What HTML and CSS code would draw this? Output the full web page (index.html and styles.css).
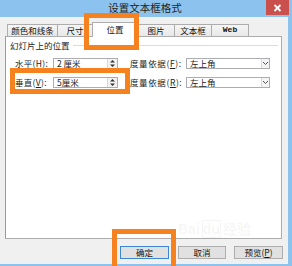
FILE: index.html
```html
<!DOCTYPE html>
<html lang="zh">
<head>
<meta charset="utf-8">
<title>设置文本框格式</title>
<link rel="stylesheet" href="styles.css">
</head>
<body>
<div class="window">
  <div class="titlebar">
    <div class="tb-side"></div>
    <div class="title">设置文本框格式</div>
    <div class="tb-side tb-right">
      <div class="close">
        <svg width="9" height="8" viewBox="0 0 9 8"><path d="M1.5 1 L7.5 7 M7.5 1 L1.5 7" stroke="#fff" stroke-width="1.8" fill="none"/></svg>
      </div>
    </div>
  </div>
  <div class="client">
    <div class="tabs">
      <div class="tab t1">颜色和线条</div>
      <div class="tab t2">尺寸</div>
      <div class="tab t3 active">位置</div>
      <div class="tab t4">图片</div>
      <div class="tab t5">文本框</div>
      <div class="tab t6 web">Web</div>
    </div>
    <div class="panel">
      <div class="group-head">
        <span class="group-label">幻灯片上的位置</span>
        <span class="group-line"></span>
      </div>
      <div class="row">
        <span class="lbl lbl1">水平(<u>H</u>):</span>
        <div class="spin">
          <span class="spin-val">2 厘米</span>
          <span class="spin-btn">
            <svg width="7" height="9" viewBox="0 0 7 9"><path d="M3.5 1 L6 3.5 H1 Z M1 5.5 H6 L3.5 8 Z" fill="#333"/></svg>
          </span>
        </div>
        <span class="lbl lbl2">度量依据(<u>F</u>):</span>
        <div class="combo">
          <span class="combo-val">左上角</span>
          <span class="combo-btn">
            <svg width="7" height="5" viewBox="0 0 7 5"><path d="M1 1 L3.5 3.5 L6 1" stroke="#555" stroke-width="1" fill="none"/></svg>
          </span>
        </div>
      </div>
      <div class="row">
        <span class="lbl lbl1">垂直(<u>V</u>):</span>
        <div class="spin">
          <span class="spin-val">5厘米</span>
          <span class="spin-btn">
            <svg width="7" height="9" viewBox="0 0 7 9"><path d="M3.5 1 L6 3.5 H1 Z M1 5.5 H6 L3.5 8 Z" fill="#333"/></svg>
          </span>
        </div>
        <span class="lbl lbl2">度量依据(<u>R</u>):</span>
        <div class="combo">
          <span class="combo-val">左上角</span>
          <span class="combo-btn">
            <svg width="7" height="5" viewBox="0 0 7 5"><path d="M1 1 L3.5 3.5 L6 1" stroke="#555" stroke-width="1" fill="none"/></svg>
          </span>
        </div>
      </div>
    </div>
    <div class="buttons">
      <button class="btn btn-ok">确定</button>
      <button class="btn btn-cancel">取消</button>
      <button class="btn btn-preview">预览(<u>P</u>)</button>
    </div>
  </div>
  <div class="watermark">Bai<span class="wm-du">du</span>经验</div>
  <div class="hl hl-tab"></div>
  <div class="hl hl-row"></div>
  <div class="hl hl-ok"></div>
</div>
</body>
</html>
```
FILE: styles.css
```css
* { box-sizing: border-box; }
html, body { margin: 0; padding: 0; }
body {
  width: 292px;
  height: 266px;
  overflow: hidden;
  font-family: "Noto Sans CJK SC", "Liberation Sans", sans-serif;
  color: #1a1a1a;
}
.window {
  position: relative;
  width: 292px;
  height: 266px;
  background: #8cc2ee;
  display: flex;
  flex-direction: column;
  overflow: hidden;
}
.titlebar {
  height: 17px;
  display: grid;
  grid-template-columns: 1fr auto 1fr;
  align-items: start;
}
.title {
  font-size: 10.5px;
  line-height: 15px;
  color: #222;
  padding-right: 2px;
}
.tb-right { display: flex; justify-content: flex-end; }
.close {
  width: 23px;
  height: 15px;
  margin-right: 3px;
  background: #c9504c;
  display: flex;
  align-items: center;
  justify-content: center;
}
.client {
  flex: 1;
  margin: 0 4px 2px 0;
  background: #f0f0f0;
  display: flex;
  flex-direction: column;
  padding-top: 7px;
}
.tabs {
  height: 12px;
  display: flex;
  align-items: flex-end;
  padding-left: 7px;
  position: relative;
  z-index: 2;
}
.tab {
  height: 12px;
  border: 1px solid #adadad;
  border-bottom: none;
  background: linear-gradient(#f5f5f5, #e8e8e8);
  font-size: 8.5px;
  line-height: 10px;
  text-align: center;
  color: #111;
  margin-left: -1px;
  white-space: nowrap;
}
.t1 { width: 51px; margin-left: 0; }
.t2 { width: 36px; }
.t3 { width: 46px; }
.t4 { width: 38px; }
.t5 { width: 38px; }
.t6 { width: 38px; }
.tab.active {
  height: 15px;
  background: #fff;
  line-height: 13px;
  margin-bottom: -1px;
}
.web {
  font-family: "Liberation Mono", monospace;
  font-weight: bold;
  font-size: 8px;
}
.panel {
  height: 203px;
  margin: 0 6px 0 5px;
  background: #fff;
  border: 1px solid #adadad;
  border-left-color: #9a9a9a;
  padding: 3px 3px 0 4px;
  position: relative;
  z-index: 1;
}
.group-head {
  display: flex;
  align-items: center;
  height: 11px;
}
.group-label {
  font-size: 8.5px;
  line-height: 11px;
  white-space: nowrap;
  color: #222;
}
.group-line {
  flex: 1;
  height: 1px;
  background: #dcdcdc;
  margin-left: 3px;
}
.row {
  display: flex;
  align-items: center;
  height: 11px;
  margin-top: 7px;
  padding-left: 5px;
  font-size: 8.5px;
}
.row + .row { margin-top: 8px; }
.lbl { white-space: nowrap; line-height: 11px; color: #222; letter-spacing: 0.3px; }
.lbl1 { width: 38px; }
.lbl2 { width: 56px; margin-left: 12px; letter-spacing: 0.6px; }
.spin, .combo {
  height: 11px;
  border: 1px solid #abadb3;
  background: #fff;
  display: flex;
  align-items: stretch;
}
.spin { width: 65px; }
.combo { width: 84px; }
.spin-val, .combo-val {
  flex: 1;
  padding-left: 3px;
  line-height: 9px;
  font-size: 8.5px;
  white-space: nowrap;
}
.spin-btn {
  width: 10px;
  background: #f2f2f2;
  border-left: 1px solid #d9d9d9;
  display: flex;
  align-items: center;
  justify-content: center;
}
.combo-btn {
  width: 8px;
  background: #f4f4f4;
  border-left: 1px solid #d9d9d9;
  display: flex;
  align-items: center;
  justify-content: center;
}
.buttons {
  display: flex;
  justify-content: flex-end;
  margin-top: 7px;
  padding-right: 5px;
}
.btn {
  height: 13px;
  padding: 0;
  background: #e1e1e1;
  border: 1px solid #adadad;
  font-family: "Noto Sans CJK SC", sans-serif;
  font-size: 8.5px;
  line-height: 11px;
  color: #111;
}
.btn-ok { width: 49px; border-color: #3d86d0; }
.btn-cancel { width: 48px; margin-left: 9px; }
.btn-preview { width: 49px; margin-left: 8px; }
.watermark {
  position: absolute;
  left: 178px;
  top: 218px;
  font-family: "Liberation Sans", "Noto Sans CJK SC", sans-serif;
  font-weight: bold;
  font-size: 14px;
  color: rgba(120, 120, 120, 0.07);
  white-space: nowrap;
  z-index: 3;
}
.wm-du {
  border: 1px solid rgba(120, 120, 120, 0.07);
  border-radius: 2px;
  margin: 0 2px;
}
.hl {
  position: absolute;
  border: 5px solid #f6821f;
  z-index: 5;
}
.hl-tab { left: 84px; top: 13px; width: 55px; height: 37px; }
.hl-row { left: 10px; top: 68px; width: 120px; height: 26px; }
.hl-ok { left: 112px; top: 229px; width: 64px; height: 42px; }
```
